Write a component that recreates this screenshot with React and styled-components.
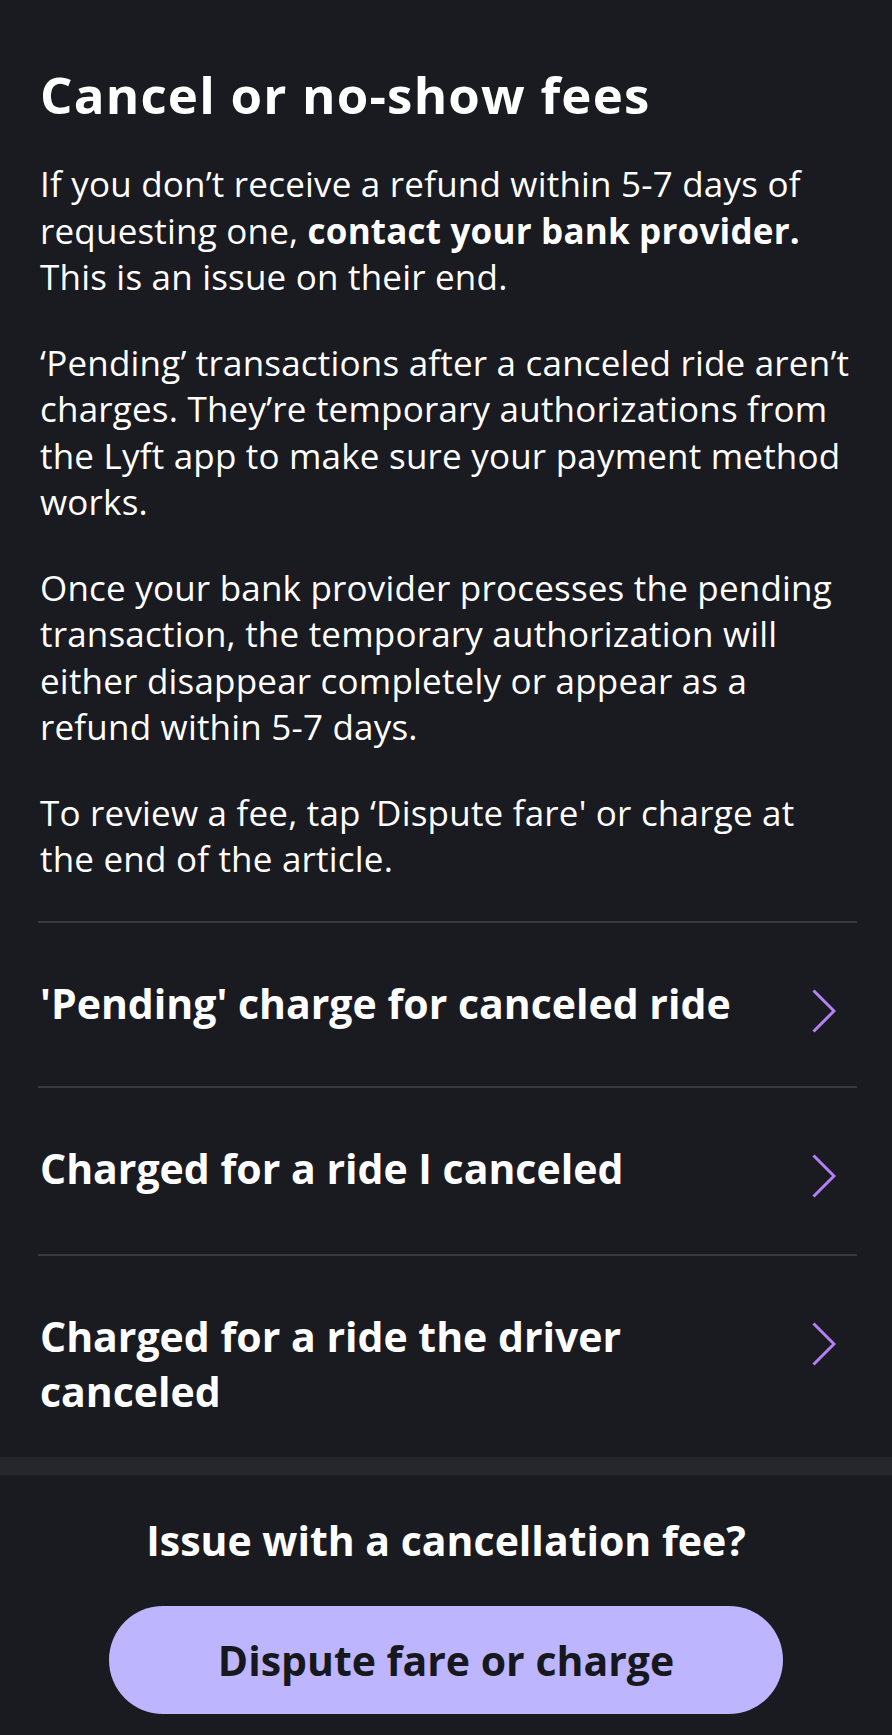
import React from 'react';
import styled, { createGlobalStyle } from 'styled-components';

const GlobalStyle = createGlobalStyle`
  html, body {
    margin: 0;
    padding: 0;
    background: #1a1a21;
  }
  body {
    font-family: 'Open Sans', 'Noto Sans', sans-serif;
    -webkit-font-smoothing: antialiased;
  }
`;

const Page = styled.div`
  width: 892px;
  min-height: 1735px;
  background: #1a1a21;
  color: #ffffff;
  display: flex;
  flex-direction: column;
`;

const Article = styled.section`
  padding: 64px 35px 0 38px;
`;

const Title = styled.h1`
  margin: 0 0 0 2px;
  font-size: 51px;
  line-height: 60px;
  font-weight: 700;
  letter-spacing: 1.2px;
`;

const Body = styled.div`
  margin-top: 37px;
  padding-left: 2px;
`;

const Paragraph = styled.p`
  margin: 0 0 39px;
  font-size: 35px;
  line-height: 46.5px;
  font-weight: 400;
  letter-spacing: 0.2px;
  &:last-child {
    margin-bottom: 0;
  }
  strong {
    font-weight: 700;
  }
`;

const LinkList = styled.ul`
  list-style: none;
  margin: 38px 0 0;
  padding: 0;
`;

const LinkRow = styled.li`
  display: flex;
  align-items: flex-start;
  box-sizing: border-box;
  border-top: 2px solid #38393e;
  padding-top: 53px;
  min-height: ${p => p.height}px;
  cursor: pointer;
`;

const LinkText = styled.span`
  flex: 1;
  padding: 0 50px 0 2px;
  font-size: 41px;
  line-height: 55px;
  font-weight: 700;
`;

const Chevron = styled.svg`
  flex: none;
  width: 24px;
  height: 44px;
  margin: 13px 21px 0 0;
`;

const Divider = styled.div`
  height: 18px;
  background: #26272c;
`;

const Footer = styled.section`
  display: flex;
  flex-direction: column;
  align-items: center;
  padding-top: 40px;
`;

const FooterTitle = styled.h2`
  margin: 0;
  font-size: 41px;
  line-height: 50px;
  font-weight: 700;
`;

const DisputeButton = styled.button`
  margin-top: 41px;
  width: 674px;
  height: 108px;
  border: none;
  border-radius: 54px;
  background: #bdb5fe;
  color: #17171e;
  font-family: 'Open Sans', 'Noto Sans', sans-serif;
  font-size: 41px;
  font-weight: 700;
  cursor: pointer;
`;

const ChevronIcon = () => (
  <Chevron viewBox="0 0 24 44" fill="none">
    <path d="M1.5 1.5 L22 22 L1.5 42.5" stroke="#b681f6" strokeWidth="3" />
  </Chevron>
);

const links = [
  { label: "'Pending' charge for canceled ride", height: 165 },
  { label: 'Charged for a ride I canceled', height: 168 },
  { label: 'Charged for a ride the driver canceled', height: 203 },
];

const App = () => (
  <>
    <GlobalStyle />
    <Page>
      <Article>
        <Title>Cancel or no-show fees</Title>
        <Body>
          <Paragraph>
            If you don’t receive a refund within 5-7 days of requesting one, <strong>contact your bank provider.</strong> This is an issue on their end.
          </Paragraph>
          <Paragraph>
            ‘Pending’ transactions after a canceled ride aren’t charges. They’re temporary authorizations from the Lyft app to make sure your payment method works.
          </Paragraph>
          <Paragraph>
            Once your bank provider processes the pending transaction, the temporary authorization will either disappear completely or appear as a refund within 5-7 days.
          </Paragraph>
          <Paragraph>
            To review a fee, tap ‘Dispute fare' or charge at the end of the article.
          </Paragraph>
        </Body>
        <LinkList>
          {links.map((link, index) => (
            <LinkRow key={index} height={link.height}>
              <LinkText>{link.label}</LinkText>
              <ChevronIcon />
            </LinkRow>
          ))}
        </LinkList>
      </Article>
      <Divider />
      <Footer>
        <FooterTitle>Issue with a cancellation fee?</FooterTitle>
        <DisputeButton>Dispute fare or charge</DisputeButton>
      </Footer>
    </Page>
  </>
);

export default App;
